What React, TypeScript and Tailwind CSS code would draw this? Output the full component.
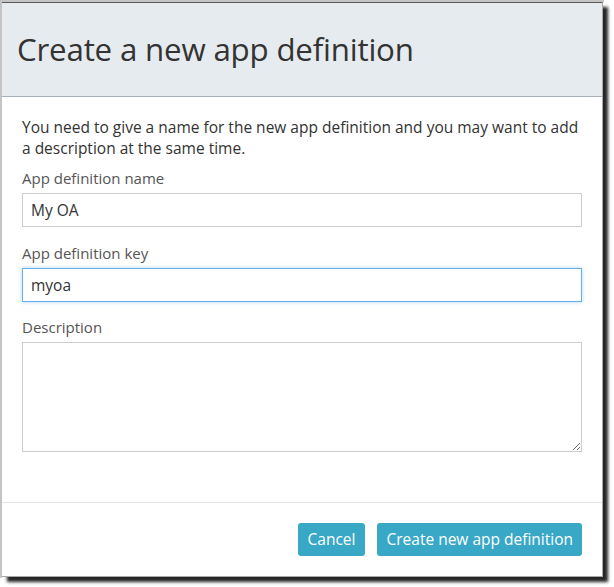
import React, { useState } from 'react';

const App: React.FC = () => {
    const [name, setName] = useState<string>('My OA');
    const [key, setKey] = useState<string>('myoa');
    const [description, setDescription] = useState<string>('');

    return (
        <div className="w-[614px] h-[587px] bg-white overflow-hidden" style={{ fontFamily: '"Open Sans", "Noto Sans", sans-serif' }}>
            <div className="w-[604px] h-[578px] border-l-2 border-t-2 border-[#c4c4c4]">
                {/* dialog */}
                <div className="w-[601px] h-[575px] flex flex-col bg-white border-t border-r border-b border-t-[#5a5a5a] border-r-[#a8a8a8] border-b-[#a8a8a8] shadow-[5px_5px_3px_rgba(0,0,0,0.85)]">
                    {/* header */}
                    <div className="h-[94px] bg-[#e6ebef] border-b border-[#a7afb8] flex items-center pl-[15px]">
                        <h1 className="text-[31.3px] text-[#333333] font-normal leading-none tracking-[-0.2px]">Create a new app definition</h1>
                    </div>

                    {/* body */}
                    <div className="flex-1 px-5 pt-[20px] text-[15px] text-[#333333]">
                        <p className="leading-[21px] text-[15.5px] whitespace-nowrap">
                            You need to give a name for the new app definition and you may want to add<br />
                            a description at the same time.
                        </p>

                        <label className="block mt-[9px] mb-[5px] text-[#555555] leading-5">App definition name</label>
                        <input
                            className="w-full h-[34px] px-2 border border-[#cccccc] text-[#333333] text-[15.5px] outline-none"
                            value={name}
                            onChange={(e) => setName(e.target.value)}
                        />

                        <label className="block mt-[16px] mb-[5px] text-[#555555] leading-5">App definition key</label>
                        <input
                            className="w-full h-[34px] px-2 border border-[#66afe9] shadow-[0_0_4px_rgba(102,175,233,0.5)] text-[#333333] text-[15.5px] outline-none"
                            value={key}
                            onChange={(e) => setKey(e.target.value)}
                        />

                        <label className="block mt-[15px] mb-[5px] text-[#555555] leading-5">Description</label>
                        <textarea
                            className="block w-full h-[110px] px-2 py-1 border border-[#cccccc] outline-none"
                            value={description}
                            onChange={(e) => setDescription(e.target.value)}
                        />
                    </div>

                    {/* footer */}
                    <div className="h-[74px] border-t border-[#e5e5e5] flex items-start justify-end gap-3 pr-5 pt-5">
                        <button className="h-[33px] px-[10px] rounded-[3px] bg-[#38a8c6] text-white text-[15.5px]">Cancel</button>
                        <button className="h-[33px] px-[9px] rounded-[3px] bg-[#38a8c6] text-white text-[15.5px]">Create new app definition</button>
                    </div>
                </div>
            </div>
        </div>
    );
};

export default App;
